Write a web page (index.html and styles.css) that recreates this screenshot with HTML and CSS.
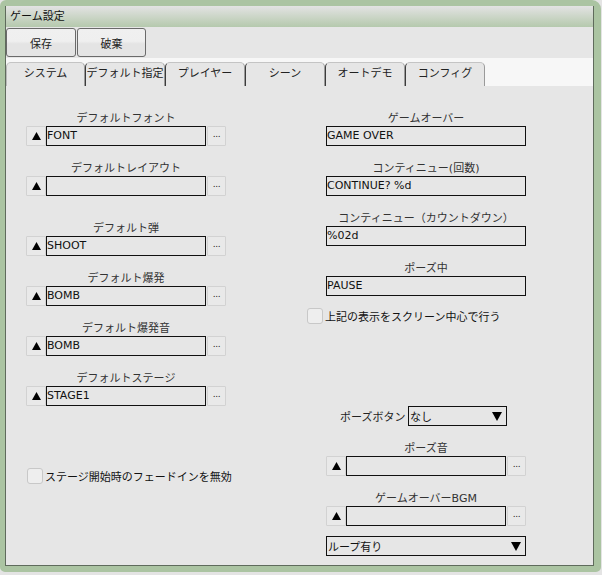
FILE: index.html
```html
<!DOCTYPE html>
<html lang="ja">
<head>
<meta charset="utf-8">
<title>ゲーム設定</title>
<link rel="stylesheet" href="styles.css">
</head>
<body>
<div class="window">
  <div class="frame">
    <div class="titlebar">ゲーム設定</div>
    <div class="toolbar">
      <button class="btn btn-save">保存</button>
      <button class="btn btn-discard">破棄</button>
    </div>
    <div class="tabstrip">
      <div class="tab tab-first">システム</div>
      <div class="tab">デフォルト指定</div>
      <div class="tab">プレイヤー</div>
      <div class="tab">シーン</div>
      <div class="tab">オートデモ</div>
      <div class="tab">コンフィグ</div>
    </div>
    <div class="content">
      <div class="col col-left">
        <div class="group">
          <div class="label">デフォルトフォント</div>
          <div class="filerow">
            <div class="upbtn"><svg width="9" height="8" viewBox="0 0 9 8"><polygon points="4.5,0 9,8 0,8" fill="#000"/></svg></div>
            <div class="field">FONT</div>
            <div class="dotbtn">...</div>
          </div>
        </div>
        <div class="group">
          <div class="label">デフォルトレイアウト</div>
          <div class="filerow">
            <div class="upbtn"><svg width="9" height="8" viewBox="0 0 9 8"><polygon points="4.5,0 9,8 0,8" fill="#000"/></svg></div>
            <div class="field"></div>
            <div class="dotbtn">...</div>
          </div>
        </div>
        <div class="group group-wide">
          <div class="label">デフォルト弾</div>
          <div class="filerow">
            <div class="upbtn"><svg width="9" height="8" viewBox="0 0 9 8"><polygon points="4.5,0 9,8 0,8" fill="#000"/></svg></div>
            <div class="field">SHOOT</div>
            <div class="dotbtn">...</div>
          </div>
        </div>
        <div class="group">
          <div class="label">デフォルト爆発</div>
          <div class="filerow">
            <div class="upbtn"><svg width="9" height="8" viewBox="0 0 9 8"><polygon points="4.5,0 9,8 0,8" fill="#000"/></svg></div>
            <div class="field">BOMB</div>
            <div class="dotbtn">...</div>
          </div>
        </div>
        <div class="group">
          <div class="label">デフォルト爆発音</div>
          <div class="filerow">
            <div class="upbtn"><svg width="9" height="8" viewBox="0 0 9 8"><polygon points="4.5,0 9,8 0,8" fill="#000"/></svg></div>
            <div class="field">BOMB</div>
            <div class="dotbtn">...</div>
          </div>
        </div>
        <div class="group">
          <div class="label">デフォルトステージ</div>
          <div class="filerow">
            <div class="upbtn"><svg width="9" height="8" viewBox="0 0 9 8"><polygon points="4.5,0 9,8 0,8" fill="#000"/></svg></div>
            <div class="field">STAGE1</div>
            <div class="dotbtn">...</div>
          </div>
        </div>
        <label class="check check-fade"><span class="box"></span><span class="check-text">ステージ開始時のフェードインを無効</span></label>
      </div>
      <div class="col col-right">
        <div class="group group-r">
          <div class="label">ゲームオーバー</div>
          <div class="field field-full">GAME OVER</div>
        </div>
        <div class="group group-r">
          <div class="label">コンティニュー(回数)</div>
          <div class="field field-full">CONTINUE? %d</div>
        </div>
        <div class="group group-r">
          <div class="label">コンティニュー（カウントダウン）</div>
          <div class="field field-full">%02d</div>
        </div>
        <div class="group group-r">
          <div class="label">ポーズ中</div>
          <div class="field field-full">PAUSE</div>
        </div>
        <label class="check check-center"><span class="box"></span><span class="check-text">上記の表示をスクリーン中心で行う</span></label>
        <div class="pauserow">
          <span class="inline-label">ポーズボタン</span>
          <div class="select select-small"><span>なし</span><svg width="10" height="9" viewBox="0 0 10 9"><polygon points="0,0 10,0 5,9" fill="#000"/></svg></div>
        </div>
        <div class="group group-r">
          <div class="label">ポーズ音</div>
          <div class="filerow">
            <div class="upbtn"><svg width="9" height="8" viewBox="0 0 9 8"><polygon points="4.5,0 9,8 0,8" fill="#000"/></svg></div>
            <div class="field"></div>
            <div class="dotbtn">...</div>
          </div>
        </div>
        <div class="group group-r">
          <div class="label">ゲームオーバーBGM</div>
          <div class="filerow">
            <div class="upbtn"><svg width="9" height="8" viewBox="0 0 9 8"><polygon points="4.5,0 9,8 0,8" fill="#000"/></svg></div>
            <div class="field"></div>
            <div class="dotbtn">...</div>
          </div>
        </div>
        <div class="select select-full"><span>ループ有り</span><svg width="10" height="9" viewBox="0 0 10 9"><polygon points="0,0 10,0 5,9" fill="#000"/></svg></div>
      </div>
    </div>
  </div>
</div>
</body>
</html>
```
FILE: styles.css
```css
* { box-sizing: border-box; }
html, body {
  margin: 0;
  padding: 0;
  background: #e4e4e4;
}
body {
  font-family: "DejaVu Sans", "Noto Sans CJK JP", sans-serif;
  font-size: 11px;
  color: #111;
  width: 602px;
  height: 575px;
  overflow: hidden;
}
.window {
  width: 601px;
  height: 572px;
  border-style: solid;
  border-color: #abc4a2;
  border-width: 6px 7px 6px 5px;
  border-radius: 6px 9px 5px 5px;
  background: #abc4a2;
}
.frame {
  height: 100%;
  display: flex;
  flex-direction: column;
  border-left: 1px solid #5f6b5c;
  border-right: 1px solid #5f6b5c;
  border-bottom: 1px solid #5f6b5c;
  background: #e6e6e6;
}
.titlebar {
  height: 21px;
  line-height: 21px;
  padding-left: 4px;
  background: linear-gradient(#e3e3e3, #b5c9ad);
  color: #111;
  flex: none;
}
.toolbar {
  height: 31px;
  padding-top: 1px;
  display: flex;
  gap: 1px;
  background: #e6e6e6;
  flex: none;
}
.btn {
  height: 29px;
  font: inherit;
  color: #222;
  border: 1px solid #6a6a6a;
  border-radius: 3px;
  background: linear-gradient(#f0f0f0 0%, #efefef 45%, #e4e4e4 55%, #e4e4e4 100%);
  padding: 0;
  padding-top: 1px;
}
.btn-save { width: 70px; }
.btn-discard { width: 69px; }
.tabstrip {
  height: 28px;
  padding-top: 4px;
  display: flex;
  background: #f7f7f7;
  flex: none;
}
.tab {
  width: 80px;
  height: 24px;
  line-height: 22px;
  text-align: center;
  color: #222;
  background: #e6e6e6;
  border-top: 1px solid #c4c4c4;
  border-left: 1px solid #3c3c3c;
  border-right: 1px solid #9a9a9a;
  border-radius: 5px 5px 0 0;
  white-space: nowrap;
  overflow: hidden;
}
.tab-first {
  width: 79px;
  border-left-color: #b8b8b8;
}
.content {
  flex: 1;
  display: flex;
  padding: 24px 0 0 20px;
  background: #e6e6e6;
}
.col {
  display: flex;
  flex-direction: column;
}
.col-left { width: 200px; }
.col-right {
  width: 220px;
  margin-left: 80px;
}
.group + .group { margin-top: 14px; }
.group.group-wide { margin-top: 24px; }
.group-r { margin-left: 20px; width: 200px; }
.label {
  height: 16px;
  line-height: 16px;
  text-align: center;
  color: #333;
  white-space: nowrap;
  padding-top: 1px;
}
.filerow {
  display: flex;
  height: 20px;
}
.upbtn {
  width: 20px;
  height: 20px;
  display: flex;
  align-items: center;
  justify-content: center;
  background: #e9e9e9;
  border: 1px solid #d2d2d2;
  border-radius: 1px;
  padding-bottom: 1px;
}
.field {
  flex: 1;
  height: 20px;
  border: 1px solid #111;
  background: #e6e6e6;
  line-height: 18px;
  padding-left: 0;
  color: #111;
  white-space: nowrap;
}
.field-full {
  width: 200px;
  flex: none;
}
.dotbtn {
  width: 19px;
  height: 20px;
  margin-left: 1px;
  background: #e9e9e9;
  border: 1px solid #d2d2d2;
  border-radius: 1px;
  font-size: 9px;
  line-height: 14px;
  text-align: center;
  color: #222;
  letter-spacing: -0.3px;
}
.check {
  display: flex;
  align-items: center;
  height: 16px;
}
.box {
  width: 16px;
  height: 16px;
  border: 1px solid #c8c8c8;
  border-radius: 3px;
  background: #eeeeee;
  flex: none;
}
.check-text {
  margin-left: 2px;
  color: #111;
  white-space: nowrap;
}
.check-fade {
  margin-top: 62px;
  margin-left: 1px;
}
.check-center {
  margin-top: 12px;
  margin-left: 1px;
}
.pauserow {
  margin-top: 82px;
  display: flex;
  align-items: center;
  padding-left: 34px;
  height: 20px;
}
.inline-label {
  color: #222;
  white-space: nowrap;
  width: 68px;
}
.select {
  height: 20px;
  border: 1px solid #111;
  display: flex;
  align-items: center;
  justify-content: space-between;
  padding: 0 4px 0 1px;
  background: #e6e6e6;
  color: #111;
}
.select-small { width: 99px; }
.select-full {
  width: 200px;
  margin-left: 20px;
  margin-top: 10px;
}
.pauserow + .group { margin-top: 14px; }
```
